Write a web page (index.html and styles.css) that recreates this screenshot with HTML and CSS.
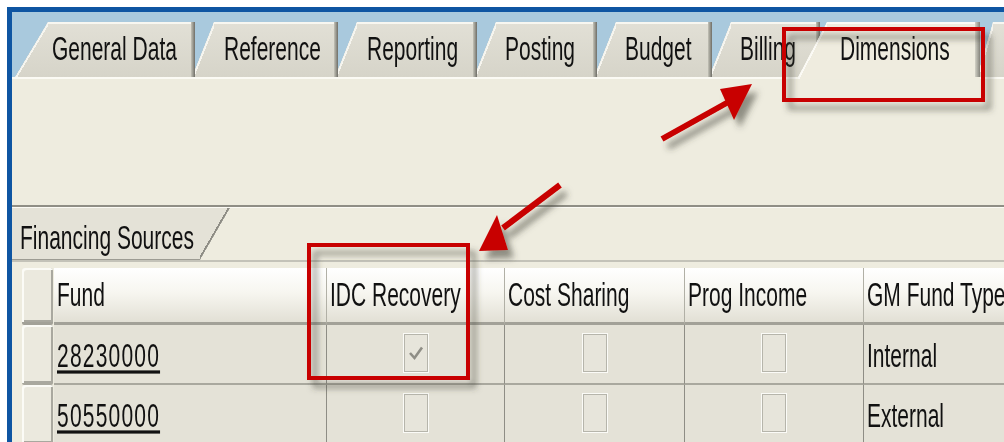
FILE: index.html
```html
<!DOCTYPE html>
<html lang="en">
<head>
<meta charset="utf-8">
<title>Sponsored Program – Dimensions</title>
<link rel="stylesheet" href="styles.css">
</head>
<body>
<div class="frame">
  <div class="tabstrip">
    <div class="tab tab-general"><span class="lbl">General Data</span></div>
    <div class="tab tab-reference"><span class="lbl">Reference</span></div>
    <div class="tab tab-reporting"><span class="lbl">Reporting</span></div>
    <div class="tab tab-posting"><span class="lbl">Posting</span></div>
    <div class="tab tab-budget"><span class="lbl">Budget</span></div>
    <div class="tab tab-billing"><span class="lbl">Billing</span></div>
    <div class="tab tab-active"><span class="lbl">Dimensions</span></div>
    <div class="tab tab-more"></div>
  </div>

  <div class="page">
    <div class="headspace"></div>
    <div class="section">
      <div class="subtabs">
        <div class="subtab"><span class="lbl">Financing Sources</span></div>
      </div>
      <div class="grid">
        <div class="sel sel-head"></div>
        <div class="hcell"><span class="lbl">Fund</span></div>
        <div class="hcell"><span class="lbl">IDC Recovery</span></div>
        <div class="hcell"><span class="lbl">Cost Sharing</span></div>
        <div class="hcell"><span class="lbl">Prog Income</span></div>
        <div class="hcell"><span class="lbl">GM Fund Type</span></div>

        <div class="sel"></div>
        <div class="cell"><span class="lbl fund">28230000</span></div>
        <div class="cell center">
          <span class="cb">
            <svg class="tick" width="16" height="16" viewBox="0 0 16 16"><path d="M2 8 L6.5 13 L14 2.5" fill="none" stroke="#8f8e86" stroke-width="2.6"/></svg>
          </span>
        </div>
        <div class="cell center"><span class="cb"></span></div>
        <div class="cell center"><span class="cb"></span></div>
        <div class="cell"><span class="lbl">Internal</span></div>

        <div class="sel"></div>
        <div class="cell"><span class="lbl fund">50550000</span></div>
        <div class="cell center"><span class="cb"></span></div>
        <div class="cell center"><span class="cb"></span></div>
        <div class="cell center"><span class="cb"></span></div>
        <div class="cell"><span class="lbl">External</span></div>
      </div>
    </div>
  </div>
</div>

<svg class="marks" width="1004" height="442" viewBox="0 0 1004 442">
  <defs>
    <filter id="shade" x="-20%" y="-20%" width="150%" height="150%">
      <feDropShadow dx="6" dy="8" stdDeviation="3" flood-color="#3c3c36" flood-opacity="0.55"/>
    </filter>
  </defs>
  <g filter="url(#shade)">
    <rect x="784" y="29" width="199" height="71" fill="none" stroke="#c80000" stroke-width="4"/>
    <rect x="309" y="245" width="159" height="133" fill="none" stroke="#c80000" stroke-width="4"/>
    <line x1="662" y1="139" x2="732" y2="100" stroke="#c80000" stroke-width="6"/>
    <polygon points="752,84 720,89 734,120" fill="#c80000"/>
    <line x1="560" y1="185" x2="503" y2="228" stroke="#c80000" stroke-width="6"/>
    <polygon points="479,251 497,215 508,250" fill="#c80000"/>
  </g>
</svg>
</body>
</html>
```

FILE: styles.css
```css
html, body {
  margin: 0;
  padding: 0;
  background: #ffffff;
  overflow: hidden;
}

body {
  position: relative;
  width: 1004px;
  height: 442px;
  font-family: "Liberation Sans", Arial, sans-serif;
  color: #111;
}

/* SAP-style window frame */
.frame {
  margin: 7px 0 0 7px;
  height: 435px;
  box-sizing: border-box;
  border-top: 5px solid #0e55a2;
  border-left: 5px solid #0e55a2;
  overflow: hidden;
  background: #eeecdf;
}

/* tall, narrow screen font */
.lbl {
  display: inline-block;
  font-size: 21px;
  line-height: 20px;
  white-space: nowrap;
  transform: scaleY(1.6);
  color: #111;
}

/* ---------- main tab strip ---------- */
.tabstrip {
  height: 65px;
  background: #a9c9dd;
  display: flex;
  align-items: flex-end;
}

.tab {
  --s: 22px;
  position: relative;
  flex: none;
  box-sizing: border-box;
  height: 55px;
  margin-left: -3px;
  padding-left: 32px;
  padding-bottom: 2px;
  display: flex;
  align-items: center;
  clip-path: polygon(var(--s) 0, 100% 0, 100% 100%, 0 100%);
  background:
    linear-gradient(to bottom right, transparent 50%, #f6f5ef 50%, #f6f5ef calc(50% + 2px), transparent calc(50% + 2px)) left top / var(--s) 100% no-repeat,
    linear-gradient(to right, #c4c3b8, #6f6e67) right top / 4px 100% no-repeat,
    linear-gradient(#f8f7f1, #f8f7f1) left top / 100% 2px no-repeat,
    linear-gradient(#e2e0d6, #d6d4c9);
}

.tab-general   { --s: 33px; width: 180px; margin-left: 3px; padding-left: 37px; z-index: 8; }
.tab-reference { width: 146px; z-index: 7; }
.tab-reporting { width: 142px; z-index: 6; }
.tab-posting   { width: 123px; padding-left: 31px; z-index: 5; }
.tab-budget    { width: 118px; padding-left: 31px; z-index: 4; }
.tab-billing   { width: 111px; padding-left: 31px; z-index: 3; }
.tab-more      { --s: 16px; width: 40px; z-index: 1; }

.tab-active {
  --s: 30px;
  width: 183px;
  height: 57px;
  margin-left: -23px;
  margin-bottom: -2px;
  padding-left: 43px;
  padding-bottom: 4px;
  z-index: 10;
  background:
    linear-gradient(to bottom right, transparent 50%, #fbfaf5 50%, #fbfaf5 calc(50% + 2px), transparent calc(50% + 2px)) left top / var(--s) 100% no-repeat,
    linear-gradient(to right, #d3d2c7, #85847c) right top / 5px calc(100% - 2px) no-repeat,
    linear-gradient(#fbfaf5, #fbfaf5) left top / 100% 2px no-repeat,
    #efecdf;
}

/* ---------- page body ---------- */
.page {
  border-top: 2px solid #fbfaf4;
  background: #eeecdf;
  height: 400px;
}

.headspace {
  height: 126px;
}

.section {
  border-top: 2px solid #8f8e85;
}

.subtabs {
  border-top: 1px solid #fbfaf4;
  height: 52px;
}

.subtab {
  box-sizing: border-box;
  width: 218px;
  height: 52px;
  padding: 7px 0 0 8px;
  display: flex;
  align-items: center;
  clip-path: polygon(0 0, 100% 0, calc(100% - 30px) 100%, 0 100%);
  background:
    linear-gradient(to bottom right, transparent calc(50% - 2px), #8e8d85 calc(50% - 2px), #8e8d85 50%, transparent 50%) right top / 30px 100% no-repeat,
    linear-gradient(#9d9c93, #9d9c93) left bottom / 100% 1px no-repeat,
    #e4e2d7;
}

/* ---------- table control ---------- */
.grid {
  display: grid;
  grid-template-columns: 32px 273px 178px 180px 179px 200px;
  grid-template-rows: 57px 60px 60px;
  border-top: 2px solid #c3c2b8;
  padding: 6px 0 0 10px;
  width: max-content;
}

.sel {
  margin-right: 1px;
  border-bottom: 2px solid #a9a89e;
  border-radius: 3px 3px 2px 2px;
  background: #ebe9de;
  box-shadow:
    inset 2px 2px 0 #fbfbf6,
    inset -2px -2px 0 #a9a89f;
}

.sel-head {
  border-bottom: 3px solid #a2a198;
}

.hcell {
  box-sizing: border-box;
  display: flex;
  align-items: center;
  padding-left: 3px;
  border-right: 1px solid #b1b0a6;
  border-bottom: 3px solid #a2a198;
  background: linear-gradient(#ffffff 0%, #f7f6f0 45%, #e2e0d5 100%);
}

.cell {
  box-sizing: border-box;
  display: flex;
  align-items: center;
  padding: 4px 0 0 3px;
  border-right: 1px solid #8e8d85;
  border-bottom: 2px solid #a9a89e;
  background: #e4e2d7;
}

.cell.center {
  justify-content: center;
  padding: 0 0 2px 0;
}

.fund {
  text-decoration: underline;
  letter-spacing: 1.2px;
}

.cb {
  box-sizing: border-box;
  width: 24px;
  height: 38px;
  border: 1px solid #b6b5ab;
  box-shadow: 0 0 0 1px #fbfbf7;
  background: #e7e5db;
  display: flex;
  align-items: center;
  justify-content: center;
}

.tick {
  display: block;
}

/* ---------- callout annotations drawn over the screen ---------- */
.marks {
  position: absolute;
  left: 0;
  top: 0;
  pointer-events: none;
  z-index: 20;
}
```
